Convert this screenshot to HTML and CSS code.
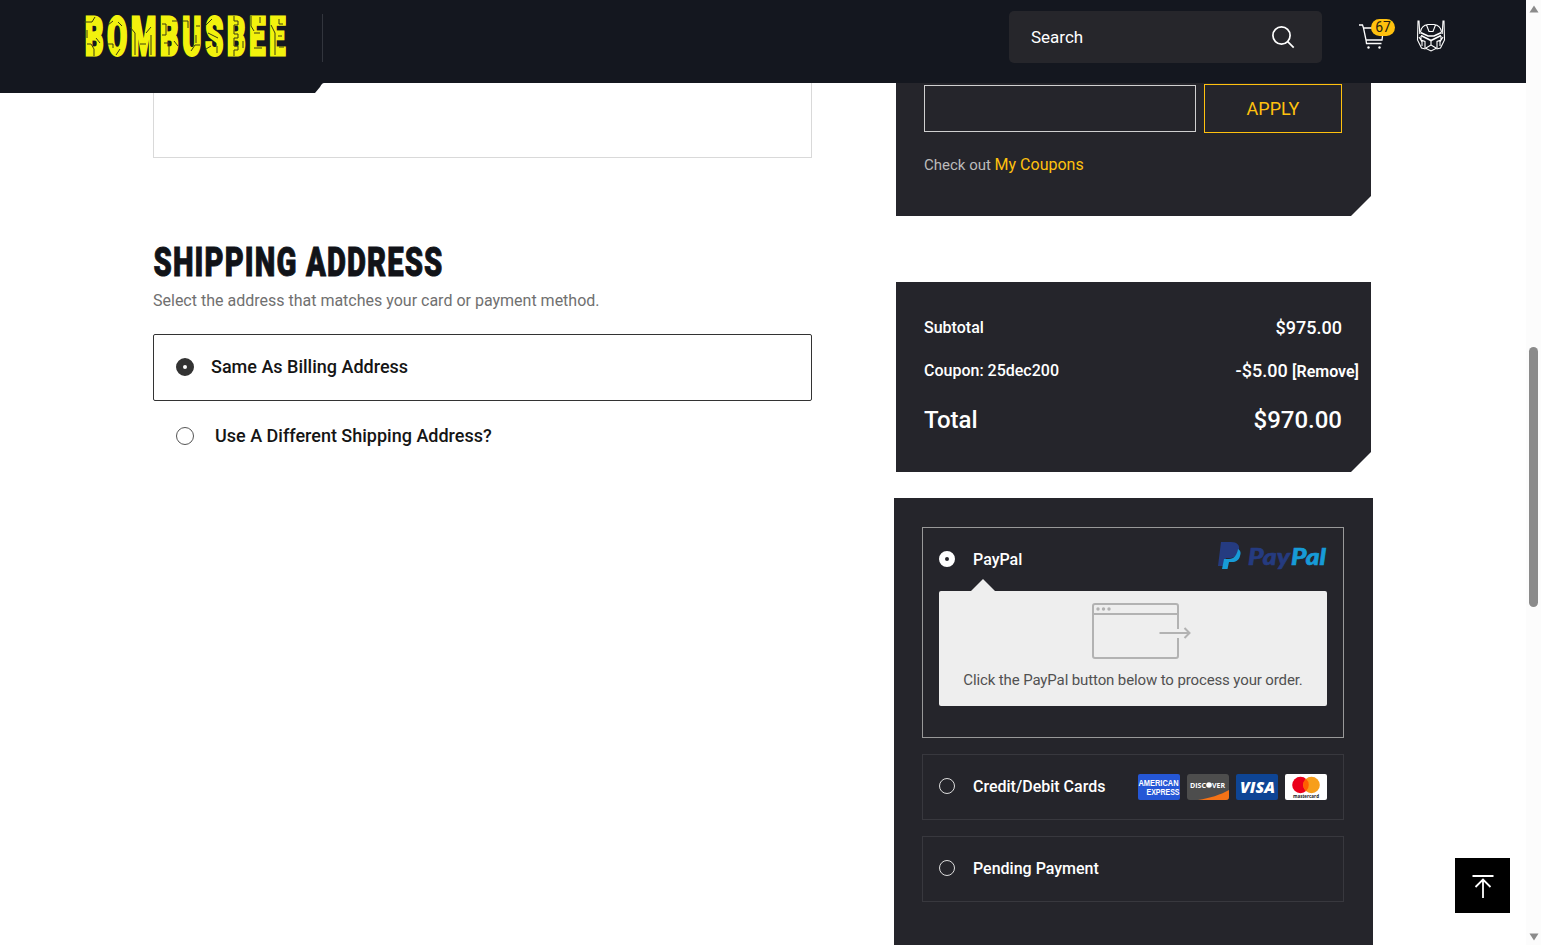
FILE: index.html
```html
<!DOCTYPE html>
<html lang="en">
<head>
  <meta charset="UTF-8" />
  <meta name="viewport" content="width=device-width, initial-scale=1.0"/>
  <title>Checkout - Bombusbee</title>
  <link rel="stylesheet" href="styles.css">
</head>
<body>
  <div class="page">
    <header class="header">
      <a class="logo" href="#">
        <svg width="204" height="46" viewBox="0 0 204 46" role="img" aria-label="Bombusbee">
          <text class="logo-text" x="1" y="42" textLength="204" lengthAdjust="spacingAndGlyphs">BOMBUSBEE</text>
          <g class="logo-lines">
            <path d="M0 9h8l3-5M3 17v8M3 31h4l3 5v7M12 25l4 5"/>
            <path d="M24 12l5-4M24 31h5v4M34 9l4 4M32 42l4-6"/>
            <path d="M46 14l5 6v22M56 31h6M67 14l-5 6M67 22v20"/>
            <path d="M78 11h4v11h-4M88 8h5M80 30h5v12M90 28l4 5"/>
            <path d="M99 8h5v7M112 13h4M107 38l4-6h5M112 22v8"/>
            <path d="M122 12l6-6M124 20l10 5M122 36l5-3M133 33v7"/>
            <path d="M150 3v5h4v4h-4v9h4v4h-4v8h4v4h-4v6M159 28v7"/>
            <path d="M167 3v10l3 5M170 20h6M170 35h8M176 4v6"/>
            <path d="M187 12l4 8v22M195 6v5h4M194 23h4M195 34h5"/>
          </g>
        </svg>
      </a>
      <span class="header-line"></span>
      <form class="search">
        <input class="search-input" type="text" placeholder="Search" aria-label="Search"/>
        <svg class="search-icon" width="24" height="24" viewBox="0 0 24 24">
          <circle cx="10.500" cy="10.500" r="8.600"/><path d="M16.700 16.700l6 6"/>
        </svg>
      </form>
      <a class="cart" href="#">
        <svg width="28" height="28" viewBox="0 0 28 28">
          <path d="M0 3h3.500l1 3h20l-1.500 12H7L4.500 6M7 18l.5 3.500h15"/>
          <circle class="wheel" cx="9.500" cy="25.500" r="1.200"/><circle class="wheel" cx="20.500" cy="25.500" r="1.200"/>
        </svg>
        <span class="cart-count">67</span>
      </a>
      <a class="account" href="#">
        <svg width="28" height="32" viewBox="0 0 28 32">
          <path d="M2.800 14L2 1H1L.5 20l4 8 4 1M25.200 14L26 1h1l.5 19-4 8-4 1"/>
          <path d="M3.500 12C4 8 7 5 11 4.500h6c4 .5 7 3.500 7.500 7.500M9.500 5l2.500 6.500h4L18.500 5"/>
          <path class="visor" d="M3.500 12.500L11 16h6l7.500-3.500M4 15.500l10 5 10-5"/>
          <path d="M4 16v4l4 1.500V28l6 3 6-3v-6.500l4-1.500v-4M14 21v4l-5 3M14 25l5 3M2 17l3 5v4M26 17l-3 5v4"/>
        </svg>
      </a>
      <svg class="header-tab" width="324" height="10" viewBox="0 0 324 10"><path d="M0 0h324q-2 0-4 4l-5 6H0z"/></svg>
    </header>

    <main class="checkout">
      <section class="billing">
        <div class="notes"></div>
        <h2 class="section-title">
          <svg width="292" height="40" viewBox="0 0 292 40">
            <text x="0.500" y="34.500" textLength="290" lengthAdjust="spacingAndGlyphs">SHIPPING ADDRESS</text>
          </svg>
        </h2>
        <p class="section-hint">Select the address that matches your card or payment method.</p>
        <label class="ship-option selected">
          <input class="radio" type="radio" name="ship" checked/>
          <span>Same As Billing Address</span>
        </label>
        <label class="ship-option different">
          <input class="radio" type="radio" name="ship"/>
          <span>Use A Different Shipping Address?</span>
        </label>
      </section>

      <aside class="sidebar">
        <div class="coupon card-cut">
          <div class="coupon-form">
            <input class="coupon-input" type="text" aria-label="Coupon code"/>
            <button class="btn-apply" type="button">APPLY</button>
          </div>
          <p class="coupon-hint">Check out <a href="#">My Coupons</a></p>
        </div>

        <div class="summary card-cut">
          <div class="row"><span>Subtotal</span><span class="amount">$975.00</span></div>
          <div class="row row-coupon"><span>Coupon: 25dec200</span><span class="amount">-$5.00 <a href="#">[Remove]</a></span></div>
          <div class="row row-total"><span>Total</span><span>$970.00</span></div>
        </div>

        <div class="payment">
          <div class="method method-active">
            <label class="method-head">
              <input class="radio light" type="radio" name="pay" checked/>
              <span>PayPal</span>
              <svg class="paypal-logo" width="110" height="30" viewBox="0 0 110 30">
                <path fill="#253b80" d="M4 1h10c6 0 9 3 8 8-1 6-5 8-10 8H9L7 25H1z"/>
                <path fill="#179bd7" d="M21 8c3 2 3 4 2 7-1 4-4 6-8 6h-3l-1.500 7H5l2-10h5c5 0 8-4 9-10z"/>
                <text class="pay" x="31" y="23.500" textLength="42" lengthAdjust="spacingAndGlyphs">Pay</text>
                <text class="pal" x="74" y="23.500" textLength="35" lengthAdjust="spacingAndGlyphs">Pal</text>
              </svg>
            </label>
            <div class="method-panel">
              <svg class="redirect-icon" width="100" height="57" viewBox="0 0 100 57">
                <path d="M86 26V3q0-2-2-2H3Q1 1 1 3v50q0 2 2 2h81q2 0 2-2V35M1 11h85M67.500 30h30M92.500 25l5 5-5 5"/>
                <circle cx="6" cy="6" r="1.700"/><circle cx="11.500" cy="6" r="1.700"/><circle cx="17" cy="6" r="1.700"/>
              </svg>
              <p>Click the PayPal button below to process your order.</p>
            </div>
          </div>

          <label class="method method-head">
            <input class="radio light" type="radio" name="pay"/>
            <span>Credit/Debit Cards</span>
            <span class="cards">
              <svg width="42" height="26" viewBox="0 0 42 26">
                <rect width="42" height="26" rx="2" fill="#2557d6"/>
                <text class="amex" x="0.500" y="12" textLength="40" lengthAdjust="spacingAndGlyphs">AMERICAN</text>
                <text class="amex" x="8.500" y="20.500" textLength="33" lengthAdjust="spacingAndGlyphs">EXPRESS</text>
              </svg>
              <svg width="42" height="26" viewBox="0 0 42 26">
                <rect width="42" height="26" rx="3" fill="#4d4d4d"/>
                <path fill="#f47216" d="M11 26c12-2 22-5 31-10v7q0 3-3 3z"/>
                <text class="discover" x="3" y="13.500" textLength="16" lengthAdjust="spacingAndGlyphs">DISC</text>
                <circle cx="22" cy="11" r="2.800" fill="#fff"/>
                <text class="discover" x="25" y="13.500" textLength="13" lengthAdjust="spacingAndGlyphs">VER</text>
              </svg>
              <svg width="42" height="26" viewBox="0 0 42 26">
                <rect width="42" height="26" rx="2" fill="#0e4595"/>
                <text class="visa" x="4" y="18.500" textLength="35" lengthAdjust="spacingAndGlyphs">VISA</text>
              </svg>
              <svg width="42" height="26" viewBox="0 0 42 26">
                <rect width="42" height="26" rx="2" fill="#fff"/>
                <circle cx="15.500" cy="11" r="8.300" fill="#eb001b"/>
                <circle cx="26.500" cy="11" r="8.300" fill="#f79e1b"/>
                <path fill="#ff5f00" d="M21 4.800a8.300 8.300 0 0 1 0 12.400a8.300 8.300 0 0 1 0-12.400z"/>
                <text class="mastercard" x="8" y="24" textLength="26" lengthAdjust="spacingAndGlyphs">mastercard</text>
              </svg>
            </span>
          </label>

          <label class="method method-head">
            <input class="radio light" type="radio" name="pay"/>
            <span>Pending Payment</span>
          </label>
        </div>
      </aside>
    </main>

    <a class="to-top" href="#" aria-label="Back to top">
      <svg width="24" height="26" viewBox="0 0 24 26"><path d="M1.500 3h21M12 25V6.500M4.500 14L12 6.500l7.500 7.500"/></svg>
    </a>
  </div>

  <div class="scrollbar">
    <svg width="10" height="8" viewBox="0 0 10 8"><path d="M5 .500L9.500 7.500H.500z"/></svg>
    <span class="scroll-thumb"></span>
    <svg width="10" height="8" viewBox="0 0 10 8"><path d="M5 7.500L9.500.500H.500z"/></svg>
  </div>
</body>
</html>
```
FILE: styles.css
```css
:root {
  --accent: #ffc10e;
  --dark: #14171f;
  --panel: #25252b;
  --text: #151515;
}

* {
  box-sizing: border-box;
}

body {
  font-family: Roboto, sans-serif;
  background: #fff;
  color: var(--text);
  margin: 0;
  height: 945px;
  display: flex;
  overflow: hidden;
}

svg {
  display: block;
  fill: none;
  overflow: visible;
}

h2, p {
  margin: 0;
}

a {
  color: inherit;
  text-decoration: none;
}

.page {
  width: 1526px;
  height: 945px;
  position: relative;
  overflow: hidden;
}

/* header */

.header {
  position: relative;
  display: flex;
  align-items: flex-start;
  height: 83px;
  padding: 11px 81px 0 84px;
  background: var(--dark);
}

.header-tab {
  position: absolute;
  left: 0;
  top: 83px;
  fill: var(--dark);
}

.logo {
  padding-top: 2px;
}

.logo-text {
  font-size: 54px;
  font-weight: 900;
  letter-spacing: 7px;
  fill: #f2f20d;
  stroke: #f2f20d;
  stroke-width: 3px;
}

.logo-lines {
  stroke: #3b3d12;
  stroke-width: 1px;
}

.header-line {
  width: 1px;
  height: 48px;
  margin: 3px 0 0 34px;
  background: #32353d;
}

.search {
  display: flex;
  align-items: center;
  width: 313px;
  height: 52px;
  margin-left: auto;
  padding: 0 27px 0 22px;
  background: #26262b;
  border-radius: 5px;
}

.search-input {
  flex: 1;
  min-width: 0;
  padding: 0;
  border: none;
  outline: none;
  background: none;
  color: #fff;
  font: 400 17px Roboto, sans-serif;
}

.search-input::placeholder {
  color: #fff;
}

.search-icon {
  stroke: #fff;
  stroke-width: 1.7px;
}

.cart {
  position: relative;
  margin: 11px 0 0 37px;
  stroke: #fff;
  stroke-width: 1.3px;
}

.wheel {
  fill: #fff;
  stroke: none;
}

.cart-count {
  position: absolute;
  left: 12px;
  top: -3px;
  width: 24px;
  height: 17px;
  border-radius: 9px;
  background: var(--accent);
  color: #26210f;
  font-size: 14px;
  line-height: 17px;
  text-align: center;
}

.account {
  margin: 9px 0 0 30px;
  stroke: #fff;
  stroke-width: 1.1px;
}

.visor {
  stroke-width: 1.6px;
}

/* content */

.checkout {
  display: flex;
  justify-content: space-between;
  padding: 0 153px;
}

.billing {
  width: 659px;
}

.notes {
  height: 75px;
  border: 1px solid #d9d9d9;
  border-top: none;
}

.section-title {
  margin-top: 83px;
}

.section-title text {
  font-size: 40px;
  font-weight: 900;
  letter-spacing: 1.5px;
  fill: #111318;
  stroke: #111318;
  stroke-width: 0.9px;
}

.section-hint {
  margin-top: 8px;
  font-size: 16px;
  line-height: 24px;
  color: #707070;
}

.ship-option {
  display: flex;
  align-items: center;
  gap: 17px;
  height: 67px;
  padding: 0 0 2px 22px;
  border: 1px solid transparent;
  border-radius: 2px;
  font-size: 18px;
  font-weight: 500;
}

.ship-option.selected {
  margin-top: 21px;
  border-color: #333;
}

.ship-option.different {
  gap: 21px;
  margin-top: 2px;
}

.radio {
  appearance: none;
  flex: none;
  width: 18px;
  height: 18px;
  margin: 0;
  border: 1px solid #555;
  border-radius: 50%;
}

.radio:checked {
  border: 7px solid #333;
}

.radio.light {
  width: 16px;
  height: 16px;
  border-color: #ddd;
}

.radio.light:checked {
  border: 6px solid #fff;
}

.sidebar {
  width: 479px;
}

.card-cut {
  margin: 0 2px;
  padding: 0 29px 0 28px;
  background: var(--panel);
  color: #fff;
  clip-path: polygon(0 0, 100% 0, 100% calc(100% - 20px), calc(100% - 20px) 100%, 0 100%);
}

.coupon {
  height: 133px;
  padding-top: 1px;
}

.coupon-form {
  display: flex;
  align-items: center;
  gap: 8px;
}

.coupon-input {
  width: 272px;
  height: 47px;
  border: 1px solid #d0d0d0;
  background: none;
}

.btn-apply {
  width: 138px;
  height: 49px;
  border: 1px solid var(--accent);
  background: none;
  color: var(--accent);
  font: 400 18px Roboto, sans-serif;
}

.coupon-hint {
  margin-top: 20px;
  font-size: 15px;
  line-height: 24px;
  color: #bbb;
}

.coupon-hint a {
  color: var(--accent);
  font-size: 16px;
}

.summary {
  height: 190px;
  margin-top: 66px;
  padding-top: 24px;
}

.row {
  display: flex;
  justify-content: space-between;
  align-items: center;
  height: 43px;
  font-size: 16px;
  font-weight: 500;
}

.amount {
  font-size: 18px;
}

.amount a {
  font-size: 16px;
  font-weight: 600;
}

.row-coupon .amount {
  margin-right: -17px;
}

.row-total {
  height: 56px;
  font-size: 24px;
}

.payment {
  display: flex;
  flex-direction: column;
  gap: 16px;
  height: 480px;
  margin-top: 26px;
  padding: 29px 29px 0 28px;
  background: var(--panel);
  color: #fff;
}

.method {
  height: 66px;
  padding: 0 16px 2px;
  border: 1px solid #38383e;
}

.method-active {
  height: 211px;
  border-color: #999;
}

.method-head {
  display: flex;
  align-items: center;
  gap: 18px;
  font-size: 16px;
  font-weight: 500;
}

.method-active .method-head {
  height: 63px;
  padding-bottom: 1px;
}

.paypal-logo {
  margin: -7px 0 0 auto;
}

.pay, .pal {
  font: italic 900 23px Lato, sans-serif;
  fill: #253b80;
  stroke: #253b80;
  stroke-width: 0.6px;
}

.pal {
  fill: #179bd7;
  stroke: #179bd7;
}

.method-panel {
  position: relative;
  height: 115px;
  padding-top: 12px;
  border-radius: 2px;
  background: #eee;
  color: #515151;
  font-size: 15px;
  letter-spacing: -0.12px;
  line-height: 24px;
  text-align: center;
}

.method-panel::before {
  content: "";
  position: absolute;
  left: 32px;
  top: -12px;
  border: 12px solid transparent;
  border-top: none;
  border-bottom-color: #eee;
}

.redirect-icon {
  margin: 0 0 8px 153px;
  stroke: #b2b2b2;
  stroke-width: 2px;
}

.redirect-icon circle {
  fill: #b2b2b2;
  stroke: none;
}

.cards {
  display: flex;
  gap: 7px;
  margin: 2px 0 0 auto;
}

.amex {
  font: 700 9px "Liberation Sans", sans-serif;
  fill: #fff;
}

.discover {
  font: 700 7px "Open Sans", sans-serif;
  fill: #fff;
}

.visa {
  font: italic 800 16px "Open Sans", sans-serif;
  fill: #fff;
}

.mastercard {
  font: 700 5px "Open Sans", sans-serif;
  fill: #222;
}

.to-top {
  position: absolute;
  right: 16px;
  bottom: 32px;
  display: flex;
  align-items: center;
  justify-content: center;
  width: 55px;
  height: 55px;
  background: #000;
  stroke: #fff;
  stroke-width: 1.8px;
}

/* scrollbar */

.scrollbar {
  display: flex;
  flex-direction: column;
  align-items: center;
  width: 15px;
  padding: 5px 0 4px;
  background: #fcfcfc;
}

.scrollbar svg {
  fill: #8b8b8b;
}

.scroll-thumb {
  width: 9px;
  height: 260px;
  margin: 334px 0 auto;
  border-radius: 5px;
  background: #8b8b8b;
}
```
